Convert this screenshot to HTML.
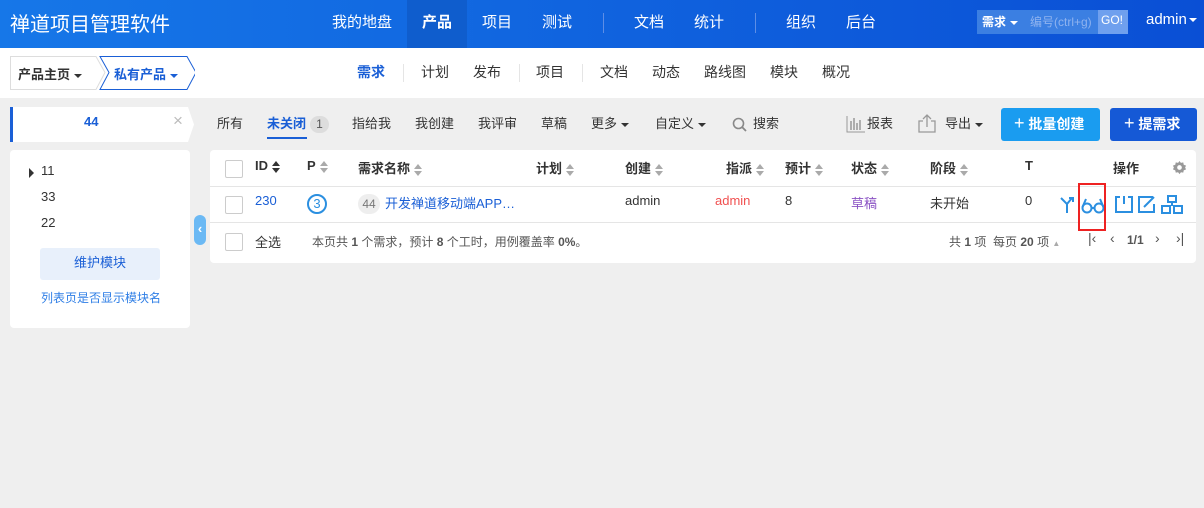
<!DOCTYPE html>
<html><head><meta charset="utf-8"><style>
*{margin:0;padding:0;box-sizing:border-box}
body{width:1204px;height:508px;background:#efefef;font-family:"Liberation Sans","Noto Sans CJK SC",sans-serif;font-size:13px;color:#333;position:relative;overflow:hidden}
.a{position:absolute;white-space:nowrap}
#hd{position:absolute;left:0;top:0;width:1204px;height:48px;background:linear-gradient(90deg,#1677e8,#0a4fd5)}
#hd .n{color:#fff;font-size:15px;top:11px}
.sep{position:absolute;width:1px;background:#5d8ee6;top:13px;height:20px}
#sub{position:absolute;left:0;top:48px;width:1204px;height:50px;background:#fff}
.sn{top:62px;font-size:14px;color:#333}
.vs{position:absolute;width:1px;height:18px;background:#e5e5e5;top:64px}
.tb{top:113px;font-size:13px;color:#333}
.caret{display:inline-block;border-left:4px solid transparent;border-right:4px solid transparent;border-top:4px solid currentColor;vertical-align:middle;margin-left:4px}
.panel{position:absolute;background:#fff;border-radius:4px}
.cb{position:absolute;width:18px;height:18px;border:1px solid #ccc;border-radius:2px;background:#fff}
.th{top:158px;font-weight:bold;font-size:13px;color:#333}
.sort{display:inline-block;width:8px;height:12px;vertical-align:middle;margin-left:4px;position:relative}
.sort:before{content:"";position:absolute;left:0;top:0;border-left:4px solid transparent;border-right:4px solid transparent;border-bottom:5px solid #aaa}
.sort:after{content:"";position:absolute;left:0;top:7px;border-left:4px solid transparent;border-right:4px solid transparent;border-top:5px solid #aaa}
.td{top:193px;font-size:13px}
.pg{top:230px;font-size:14px;color:#555}
</style></head><body>
<div id="hd">
<div class="a" style="left:10px;top:8px;color:#fff;font-size:20px">禅道项目管理软件</div>
<div class="a n" style="left:332px">我的地盘</div>
<div class="a" style="left:407px;top:0;width:60px;height:48px;background:#0f5dcd"></div>
<div class="a n" style="left:422px;font-weight:bold">产品</div>
<div class="a n" style="left:482px">项目</div>
<div class="a n" style="left:542px">测试</div>
<div class="sep" style="left:603px"></div>
<div class="a n" style="left:634px">文档</div>
<div class="a n" style="left:694px">统计</div>
<div class="sep" style="left:755px"></div>
<div class="a n" style="left:786px">组织</div>
<div class="a n" style="left:846px">后台</div>
<div class="a" style="left:977px;top:10px;width:151px;height:24px;background:#3b7fe2"></div>
<div class="a" style="left:982px;top:13px;color:#fff;font-size:12px;font-weight:bold">需求<span class="caret"></span></div>
<div class="a" style="left:1030px;top:13px;color:#8fb3ef;font-size:12px">编号(ctrl+g)</div>
<div class="a" style="left:1098px;top:10px;width:30px;height:24px;background:#6fa0ee"></div>
<div class="a" style="left:1101px;top:13px;color:#fff;font-size:12px">GO!</div>
<div class="a" style="left:1146px;top:11px;color:#fff;font-size:15px">admin<span class="caret" style="margin-left:2px"></span></div>
</div>
<div id="sub">
<svg class="a" style="left:10px;top:8px" width="185" height="34"><path d="M0.5 0.5H86L95 16.5L86 33.5H0.5Z" fill="#fff" stroke="#ddd"/><path d="M90 0.5H177L186 16.5L177 33.5H90L99 16.5Z" fill="#fff" stroke="#1a5fd6"/></svg>
<div class="a" style="left:18px;top:16px;font-size:13px;font-weight:bold;color:#333">产品主页<span class="caret"></span></div>
<div class="a" style="left:114px;top:16px;font-size:13px;font-weight:bold;color:#1a5fd6">私有产品<span class="caret"></span></div>
</div>
<div class="a sn" style="left:357px;color:#1a5fd6;font-weight:bold">需求</div>
<div class="vs" style="left:403px"></div>
<div class="a sn" style="left:421px">计划</div>
<div class="a sn" style="left:473px">发布</div>
<div class="vs" style="left:519px"></div>
<div class="a sn" style="left:536px">项目</div>
<div class="vs" style="left:582px"></div>
<div class="a sn" style="left:600px">文档</div>
<div class="a sn" style="left:652px">动态</div>
<div class="a sn" style="left:704px">路线图</div>
<div class="a sn" style="left:770px">模块</div>
<div class="a sn" style="left:822px">概况</div>

<svg class="a" style="left:10px;top:107px" width="185" height="35"><path d="M0 0H178L184 17.5L178 35H0Z" fill="#fff"/><rect x="0" y="0" width="3" height="35" fill="#1a5fd6"/></svg>
<div class="a" style="left:84px;top:114px;color:#1a5fd6;font-weight:bold;font-size:13px">44</div>
<div class="a" style="left:173px;top:111px;color:#bbb;font-size:17px">×</div>
<div class="a tb" style="left:217px">所有</div>
<div class="a tb" style="left:267px;color:#1a5fd6;font-weight:bold">未关闭</div>
<div class="a" style="left:267px;top:137px;width:40px;height:2px;background:#1a5fd6"></div>
<div class="a" style="left:310px;top:116px;width:19px;height:17px;border-radius:9px;background:#ddd;font-size:12px;text-align:center;line-height:17px;color:#555">1</div>
<div class="a tb" style="left:352px">指给我</div>
<div class="a tb" style="left:415px">我创建</div>
<div class="a tb" style="left:478px">我评审</div>
<div class="a tb" style="left:541px">草稿</div>
<div class="a tb" style="left:591px">更多<span class="caret"></span></div>
<div class="a tb" style="left:655px">自定义<span class="caret"></span></div>
<svg class="a" style="left:732px;top:117px" width="16" height="16"><circle cx="6.5" cy="6.5" r="5" fill="none" stroke="#888" stroke-width="1.6"/><path d="M10 10L14 14" stroke="#888" stroke-width="1.8"/></svg>
<div class="a tb" style="left:753px">搜索</div>
<svg class="a" style="left:846px;top:115px" width="20" height="18"><path d="M1 1V17H19" fill="none" stroke="#999"/><path d="M5 6V15M8 3V15M11 8V15M14 5V15" stroke="#999" stroke-width="1.5"/></svg>
<div class="a tb" style="left:867px">报表</div>
<svg class="a" style="left:917px;top:114px" width="20" height="20"><path d="M6 7H2V18H18V7H14" fill="none" stroke="#999" stroke-width="1.3"/><path d="M10 13V2M6 5L10 1L14 5" fill="none" stroke="#999" stroke-width="1.3"/></svg>
<div class="a tb" style="left:945px">导出<span class="caret"></span></div>
<div class="a" style="left:1001px;top:108px;width:99px;height:33px;background:#1a9cf0;border-radius:3px"></div>
<div class="a" style="left:1014px;top:113px;color:#fff;font-size:14px;font-weight:bold"><span style="font-size:18px;font-weight:normal">+</span> 批量创建</div>
<div class="a" style="left:1110px;top:108px;width:87px;height:33px;background:#1559d6;border-radius:3px"></div>
<div class="a" style="left:1124px;top:113px;color:#fff;font-size:14px;font-weight:bold"><span style="font-size:18px;font-weight:normal">+</span> 提需求</div>

<div class="panel" style="left:10px;top:150px;width:180px;height:178px"></div>
<div class="a" style="left:29px;top:168px;border-top:5px solid transparent;border-bottom:5px solid transparent;border-left:5px solid #333"></div>
<div class="a" style="left:41px;top:163px;font-size:13px">11</div>
<div class="a" style="left:41px;top:189px;font-size:13px">33</div>
<div class="a" style="left:41px;top:215px;font-size:13px">22</div>
<div class="a" style="left:40px;top:248px;width:120px;height:32px;background:#e8f0fb;border-radius:3px;color:#1a5fd6;text-align:center;line-height:30px;font-size:13px">维护模块</div>
<div class="a" style="left:41px;top:289px;color:#2e7ee6;font-size:12px">列表页是否显示模块名</div>
<div class="a" style="left:194px;top:215px;width:12px;height:30px;background:#6bb9f4;border-radius:6px;color:#fff;font-size:13px;font-weight:bold;line-height:28px;text-align:center">‹</div>

<div class="panel" style="left:210px;top:150px;width:986px;height:113px"></div>
<div class="a" style="left:210px;top:186px;width:986px;height:1px;background:#e5e5e5"></div>
<div class="a" style="left:210px;top:222px;width:986px;height:1px;background:#e5e5e5"></div>
<div class="cb" style="left:225px;top:160px"></div>
<div class="cb" style="left:225px;top:196px"></div>
<div class="cb" style="left:225px;top:233px"></div>
<div class="a th" style="left:255px">ID<span style="display:inline-block;width:8px;height:12px;vertical-align:middle;margin-left:4px;position:relative"><span style="position:absolute;left:0;top:0;border-left:4px solid transparent;border-right:4px solid transparent;border-bottom:5px solid #333"></span><span style="position:absolute;left:0;top:7px;border-left:4px solid transparent;border-right:4px solid transparent;border-top:5px solid #333"></span></span></div>
<div class="a th" style="left:307px">P<span class="sort"></span></div>
<div class="a th" style="left:358px">需求名称<span class="sort"></span></div>
<div class="a th" style="left:536px">计划<span class="sort"></span></div>
<div class="a th" style="left:625px">创建<span class="sort"></span></div>
<div class="a th" style="left:726px">指派<span class="sort"></span></div>
<div class="a th" style="left:785px">预计<span class="sort"></span></div>
<div class="a th" style="left:851px">状态<span class="sort"></span></div>
<div class="a th" style="left:930px">阶段<span class="sort"></span></div>
<div class="a th" style="left:1025px">T</div>
<div class="a th" style="left:1113px">操作</div>
<svg class="a" style="left:1172px;top:160px" width="15" height="15" viewBox="0 0 16 16"><path d="M8 1L9.5 3L12 2.5L12.5 5L15 6L14 8L15 10L12.5 11L12 13.5L9.5 13L8 15L6.5 13L4 13.5L3.5 11L1 10L2 8L1 6L3.5 5L4 2.5L6.5 3Z" fill="#999"/><circle cx="8" cy="8" r="2.5" fill="#fff"/></svg>

<div class="a td" style="left:255px;color:#1a5fd6">230</div>
<div class="a" style="left:307px;top:194px;width:20px;height:20px;border:2px solid #2b8fe0;border-radius:50%;color:#2b8fe0;text-align:center;line-height:16px;font-size:13px">3</div>
<div class="a" style="left:358px;top:194px;width:22px;height:20px;border-radius:10px;background:#eee;color:#777;font-size:12px;text-align:center;line-height:20px">44</div>
<div class="a td" style="left:385px;color:#1a5fd6">开发禅道移动端APP…</div>
<div class="a td" style="left:625px">admin</div>
<div class="a td" style="left:715px;color:#f05050">admin</div>
<div class="a td" style="left:785px">8</div>
<div class="a td" style="left:851px;color:#8a52c4">草稿</div>
<div class="a td" style="left:930px">未开始</div>
<div class="a td" style="left:1025px">0</div>
<svg class="a" style="left:1058px;top:193px" width="130" height="22" fill="none" stroke="#2b8fe0" stroke-width="2">
<path d="M3 5L9 11V20M9 11L14 5M11 5H15V9"/>
<circle cx="29" cy="15" r="4.5"/><circle cx="41" cy="15" r="4.5"/><path d="M24.5 14L28 6M45.5 14L42 6M33.5 15H36.5"/>
<path d="M62 4H58V19H74V4H70M66 3V11"/>
<path d="M95 4H81V19H96V11M86 14L96 4" />
<path d="M110 3H118V9H110ZM104 13H112V20H104ZM116 13H124V20H116ZM114 9V13"/>
</svg>
<div class="a" style="left:1078px;top:183px;width:28px;height:48px;border:2px solid #e22"></div>

<div class="a" style="left:255px;top:232px;font-size:13px">全选</div>
<div class="a" style="left:312px;top:233px;font-size:12px;color:#555">本页共 <b>1</b> 个需求，预计 <b>8</b> 个工时，用例覆盖率 <b>0%</b>。</div>
<div class="a" style="left:949px;top:233px;font-size:12px;color:#555">共 <b>1</b> 项 &nbsp;每页 <b>20</b> 项 <span style="font-size:8px;color:#aaa">▲</span></div>
<div class="a pg" style="left:1088px">|‹</div>
<div class="a pg" style="left:1110px">‹</div>
<div class="a" style="left:1127px;top:233px;font-size:12px;font-weight:bold;color:#555">1/1</div>
<div class="a pg" style="left:1155px">›</div>
<div class="a pg" style="left:1176px">›|</div>
</body></html>
